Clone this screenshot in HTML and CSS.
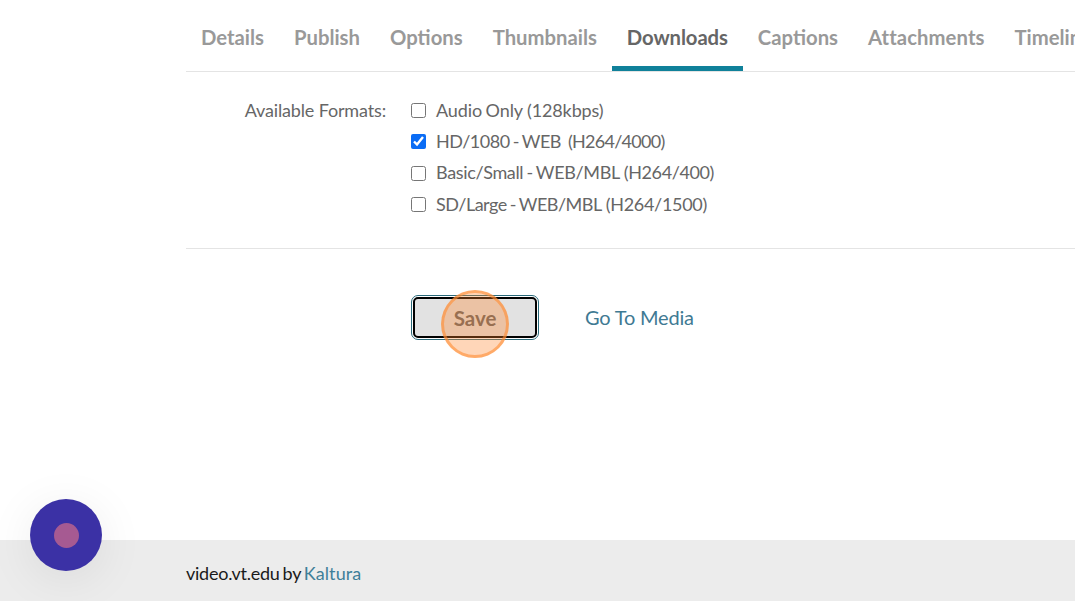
FILE: index.html
```html
<!DOCTYPE html>
<html lang="en">
<head>
<meta charset="utf-8">
<title>Downloads</title>
<link rel="stylesheet" href="styles.css">
</head>
<body>
<div class="page">
  <main class="content">
    <nav class="tabs">
      <a class="tab">Details</a>
      <a class="tab">Publish</a>
      <a class="tab">Options</a>
      <a class="tab">Thumbnails</a>
      <a class="tab active">Downloads</a>
      <a class="tab">Captions</a>
      <a class="tab">Attachments</a>
      <a class="tab">Timeline</a>
    </nav>
    <form class="formats">
      <div class="formats-label">Available Formats:</div>
      <div class="formats-list">
        <label class="format"><input type="checkbox"><span class="name">Audio Only</span> <span class="code">(128kbps)</span></label>
        <label class="format"><input type="checkbox" checked><span class="name">HD/1080 - WEB</span> <span class="code">(H264/4000)</span></label>
        <label class="format"><input type="checkbox"><span class="name">Basic/Small - WEB/MBL</span> <span class="code">(H264/400)</span></label>
        <label class="format"><input type="checkbox"><span class="name">SD/Large - WEB/MBL</span> <span class="code">(H264/1500)</span></label>
      </div>
    </form>
    <div class="actions">
      <button class="save" type="button">Save</button>
      <a class="go">Go To Media</a>
    </div>
  </main>
  <footer class="footer">video.vt.edu by <a class="kaltura">Kaltura</a></footer>
  <div class="highlight"></div>
  <div class="launcher"><div class="launcher-dot"></div></div>
</div>
</body>
</html>
```
FILE: styles.css
```css
* { box-sizing: border-box; }
html, body { margin: 0; padding: 0; height: 100%; overflow: hidden; background: #fff; }
.page {
  position: relative;
  width: 1075px;
  height: 601px;
  display: flex;
  flex-direction: column;
  overflow: hidden;
  font-family: Lato, sans-serif;
  font-size: 18px;
  color: #666;
}
.content { flex: 1; padding-left: 186px; min-width: 0; }
.tabs {
  display: flex;
  height: 72px;
  border-bottom: 1px solid #e4e4e4;
  white-space: nowrap;
}
.tab {
  padding: 22px 15px 0;
  height: 71px;
  font-size: 20.3px;
  line-height: 30px;
  font-weight: 700;
  color: #999;
  flex: none;
}
.tab:nth-child(7) { letter-spacing: .08px; }
.tab.active { color: #666; border-bottom: 5px solid #10819a; letter-spacing: -.1px; }
.formats {
  display: flex;
  height: 177px;
  padding-top: 23px;
  border-bottom: 1px solid #e4e4e4;
}
.formats-label { width: 200px; text-align: right; line-height: 30px; letter-spacing: -.15px; }
.formats-list { margin-left: 25px; display: flex; flex-direction: column; }
.format { display: flex; align-items: center; height: 31.3px; white-space: pre; }
.format span { position: relative; top: -1px; word-spacing: -1px; }
.format .name { letter-spacing: -.4px; margin-right: 4px; }
.format:nth-child(1) .name { letter-spacing: -.1px; }
.format:nth-child(1) .code { letter-spacing: -.13px; }
.format:nth-child(2) .name { letter-spacing: -.5px; margin-right: 7px; }
.format:nth-child(2) .code { letter-spacing: -.73px; }
.format:nth-child(3) .name { letter-spacing: -.35px; }
.format:nth-child(3) .code { letter-spacing: -.4px; }
.format:nth-child(4) .name { letter-spacing: -.5px; }
.format:nth-child(4) .code { letter-spacing: -.3px; }
.format input { width: 15px; height: 15px; margin: 0 10px 0 0; accent-color: #0a6cf5; }
.actions { display: flex; align-items: center; padding: 48px 0 0 227px; }
.save {
  width: 124px;
  height: 41px;
  padding: 0;
  margin: 0;
  font: 700 20.5px Lato, sans-serif;
  color: #666;
  background: #e2e2e2;
  border: 2px solid #000;
  border-radius: 5px;
  outline: 1px solid #2a6a7a;
  outline-offset: 1px;
}
.go { margin-left: 48px; font-size: 20px; color: #3f7a93; margin-top: -2px; letter-spacing: -.2px; }
.footer {
  height: 61px;
  flex: none;
  background: #ececec;
  padding-left: 186px;
  line-height: 67px;
  font-size: 18px;
  color: #1a1a1a;
  word-spacing: -1.4px;
  letter-spacing: -.25px;
}
.kaltura { color: #3f7f99; letter-spacing: .1px; }
.highlight {
  position: absolute;
  left: 441px;
  top: 290px;
  width: 68px;
  height: 68px;
  border-radius: 50%;
  background: rgba(255, 130, 40, .33);
  border: 3px solid rgba(255, 140, 50, .6);
}
.launcher {
  position: absolute;
  left: 30px;
  top: 499px;
  width: 72px;
  height: 72px;
  border-radius: 50%;
  background: #3b31a5;
  box-shadow: 0 8px 48px rgba(0, 0, 0, .08);
  display: flex;
  align-items: center;
  justify-content: center;
}
.launcher-dot { width: 25px; height: 25px; border-radius: 50%; background: #a65a92; }
```
